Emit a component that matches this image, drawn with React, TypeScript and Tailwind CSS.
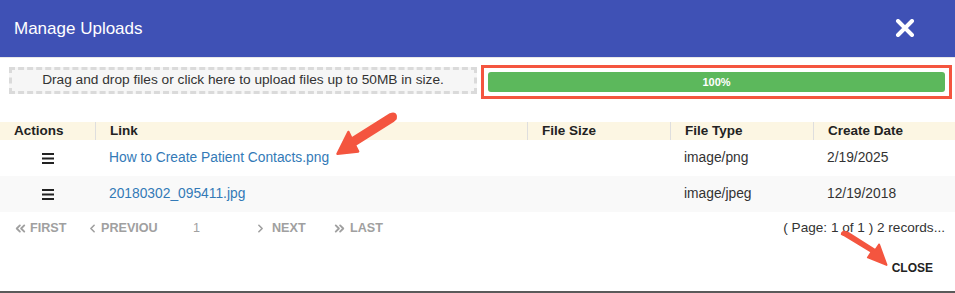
import React from "react";
import { ChevronLeft, ChevronRight, ChevronsLeft, ChevronsRight } from "lucide-react";

interface UploadRow {
  name: string;
  size: string;
  type: string;
  created: string;
}

const rows: UploadRow[] = [
  { name: "How to Create Patient Contacts.png", size: "", type: "image/png", created: "2/19/2025" },
  { name: "20180302_095411.jpg", size: "", type: "image/jpeg", created: "12/19/2018" },
];

function Bars() {
  return (
    <svg width="12" height="11" viewBox="0 0 12 11" fill="#222">
      <rect x="0" y="0" width="12" height="2" />
      <rect x="0" y="4.5" width="12" height="2" />
      <rect x="0" y="9" width="12" height="2" />
    </svg>
  );
}

function Arrow({ className, d }: { className: string; d: string }) {
  return (
    <svg className={className} viewBox="0 0 60 40" fill="none">
      <path d={d} fill="#f4553f" stroke="#f4553f" strokeWidth="2" strokeLinejoin="round" />
    </svg>
  );
}

export default function App() {
  return (
    <div className="relative w-[955px] h-[293px] bg-white overflow-hidden font-['Liberation_Sans',Arial,sans-serif] text-[#333]">
      <div className="h-[57px] bg-[#3f51b5] flex items-center justify-between pl-[14px] pr-[40px]">
        <h1 className="text-[17px] text-white">Manage Uploads</h1>
        <svg width="20" height="18" viewBox="0 0 20 18" className="mb-[2px]">
          <path d="M3 2 L17 16 M17 2 L3 16" stroke="white" strokeWidth="4" strokeLinecap="round" />
        </svg>
      </div>
      <div className="h-px bg-[#e8e8e8]" />

      <div className="flex items-start pt-[7px]">
        <div className="ml-[9px] mt-[2px] w-[468px] h-[27px] border-[3px] border-dashed border-[#dadada] bg-[#f6f6f6] flex items-center justify-center text-[13.7px] text-[#333]">
          Drag and drop files or click here to upload files up to 50MB in size.
        </div>
        <div className="ml-[4px] w-[471px] h-[34px] border-[3px] border-[#f4553f] p-[4px]">
          <div className="h-full rounded-[3px] bg-[#5cb85c] flex items-center justify-center text-[11px] font-bold text-white">
            100%
          </div>
        </div>
      </div>

      <div className="mt-[23px]">
        <div className="grid grid-cols-[95px_432px_143px_143px_142px] h-[18px] bg-[#fcf6e3] text-[13.5px] font-bold text-[#222]">
          <div className="pl-[14px] leading-[18px]">Actions</div>
          <div className="pl-[14px] leading-[18px] border-l border-[#dedede]">Link</div>
          <div className="pl-[14px] leading-[18px] border-l border-[#dedede]">File Size</div>
          <div className="pl-[14px] leading-[18px] border-l border-[#dedede]">File Type</div>
          <div className="pl-[14px] leading-[18px] border-l border-[#dedede]">Create Date</div>
        </div>
        {rows.map((row, i) => (
          <div
            key={row.name}
            className={
              "grid grid-cols-[95px_432px_143px_143px_142px] h-[36px] items-center text-[13.8px] " +
              (i % 2 === 1 ? "bg-[#f9f9f9]" : "bg-white")
            }
          >
            <div className="flex justify-center">
              <Bars />
            </div>
            <div className="pl-[14px] text-[#337ab7]">{row.name}</div>
            <div className="pl-[14px]">{row.size}</div>
            <div className="pl-[14px]">{row.type}</div>
            <div className="pl-[14px]">{row.created}</div>
          </div>
        ))}
      </div>

      <div className="flex items-center h-[33px] text-[12.6px] font-bold text-[#a0a0a0]">
        <div className="ml-[13px] w-[73px] flex items-center gap-[2px]">
          <ChevronsLeft size={15} strokeWidth={3} />
          <span>FIRST</span>
        </div>
        <div className="w-[72px] flex items-center gap-[2px] overflow-hidden whitespace-nowrap">
          <ChevronLeft size={13} strokeWidth={3} className="shrink-0" />
          <span>PREVIOUS</span>
        </div>
        <div className="w-[96px] pl-[35px] font-normal">1</div>
        <div className="w-[78px] flex items-center gap-[5px]">
          <ChevronRight size={13} strokeWidth={3} />
          <span>NEXT</span>
        </div>
        <div className="flex items-center gap-[3px]">
          <ChevronsRight size={15} strokeWidth={3} />
          <span>LAST</span>
        </div>
        <div className="ml-auto mr-[10px] text-[13.6px] font-normal text-[#333]">( Page: 1 of 1 ) 2 records...</div>
      </div>

      <div className="flex justify-end pr-[22px] pt-[14px]">
        <button className="text-[12px] font-bold text-[#222]">CLOSE</button>
      </div>

      <div className="absolute left-0 right-0 bottom-0 h-[2px] bg-[#5a5a5a]" />

      <Arrow className="absolute left-[333px] top-[111px] w-[66px] h-[46px]" d="M55 8 L20 30 L23 36 L4 38 L14 18 L17 24 L52 2 Q58 0 57 6 Z" />
      <Arrow className="absolute left-[838px] top-[230px] w-[56px] h-[40px]" d="M6 4 L36 22 L32 28 L52 36 L44 14 L40 20 L10 1 Q4 -1 4 3 Z" />
    </div>
  );
}
